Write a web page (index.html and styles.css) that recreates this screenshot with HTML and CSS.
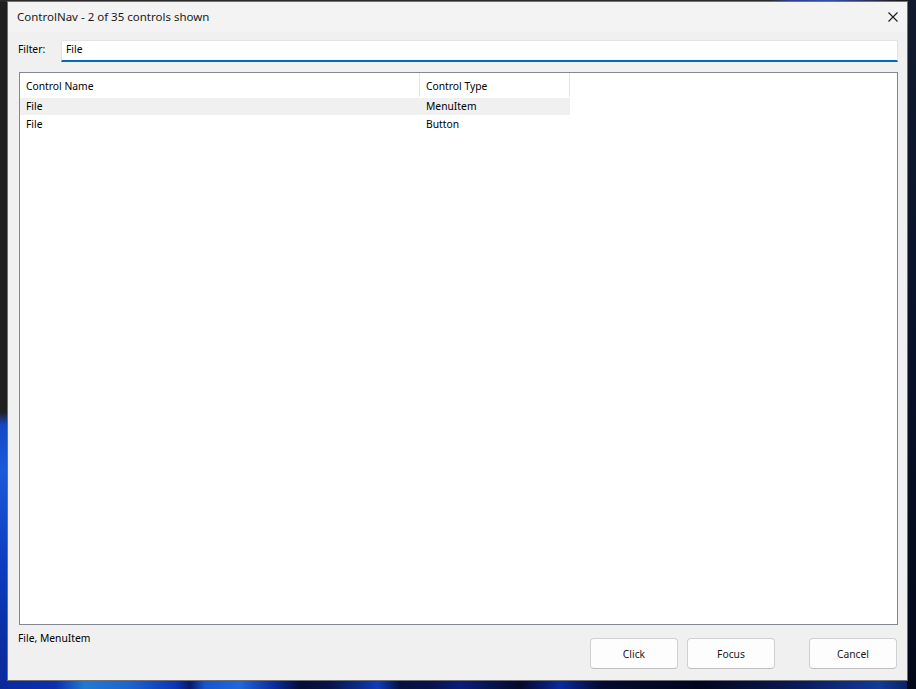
FILE: index.html
```html
<!DOCTYPE html>
<html lang="en">
<head>
<meta charset="utf-8">
<title>ControlNav</title>
<link rel="stylesheet" href="styles.css">
</head>
<body>
<div class="desktop">
  <div class="window">
    <div class="titlebar">
      <span class="title">ControlNav - 2 of 35 controls shown</span>
      <button class="close" aria-label="Close">
        <svg width="10" height="10" viewBox="0 0 10 10"><path d="M0.5 0.5 L9.5 9.5 M9.5 0.5 L0.5 9.5" stroke="#1b1b1b" stroke-width="1.1" fill="none"/></svg>
      </button>
    </div>
    <div class="content">
      <div class="filter-row">
        <label class="filter-label" for="filter">Filter:</label>
        <div class="filter-box"><input id="filter" class="filter-input" value="File"></div>
      </div>
      <div class="listview">
        <div class="lv-row lv-header">
          <div class="cell c-name">Control Name</div>
          <div class="cell c-type">Control Type</div>
        </div>
        <div class="lv-row selected">
          <div class="cell c-name">File</div>
          <div class="cell c-type">MenuItem</div>
        </div>
        <div class="lv-row">
          <div class="cell c-name">File</div>
          <div class="cell c-type">Button</div>
        </div>
      </div>
      <div class="footer">
        <div class="status">File, MenuItem</div>
        <div class="buttons">
          <button class="btn">Click</button>
          <button class="btn">Focus</button>
          <button class="btn btn-cancel">Cancel</button>
        </div>
      </div>
    </div>
  </div>
</div>
</body>
</html>
```

FILE: styles.css
```css
html, body {
  margin: 0;
  padding: 0;
}

body {
  width: 916px;
  height: 689px;
  overflow: hidden;
  font-family: "Noto Sans", "Open Sans", sans-serif;
  font-size: 11.5px;
  color: #000;
}

/* desktop wallpaper peeking around the dialog */
.desktop {
  position: relative;
  width: 916px;
  height: 689px;
  background:
    linear-gradient(to bottom, #111a2e, #07112a 50%, #030818) right top / 9px 100% no-repeat,
    linear-gradient(to right, #2a2a2a 0, #2a2a2a 770px, #2c3f8a 790px, #3550a8 830px, #2a2f58 870px, #1a1a1a 900px) left top / 100% 2px no-repeat,
    linear-gradient(to bottom, #1f1f1f 0, #1f1f1f 412px, #1547c4 425px, #1a5ad8 470px, #0d3cc0 560px, #0a2ea4 640px, #0a2a98 689px) left top / 8px 100% no-repeat,
    linear-gradient(to right, #0a2aa0 0, #0c2fb0 55px, #1f7ad4 85px, #1a64d0 130px, #0c36b8 175px, #061a6a 190px, #1656d0 205px, #1e68dc 240px, #0a2a9c 275px, #040c38 300px, #071448 330px, #0b2c8c 360px, #0f3cbc 378px, #051040 400px, #08124a 430px, #0a1e7a 460px, #040a28 520px, #0a1a70 545px, #0a2aa0 560px, #040a30 600px, #02061c 700px, #0a1a5a 800px, #113a9c 880px, #0a1a50 916px) left bottom / 100% 8px no-repeat,
    #0a1a44;
}

.window {
  position: absolute;
  left: 7px;
  top: 1px;
  width: 899px;
  height: 678px;
  border: 1px solid #6f7177;
  background: #f0f0f0;
  display: flex;
  flex-direction: column;
}

.titlebar {
  height: 30px;
  flex: none;
  background: #f3f3f3;
  display: flex;
  align-items: center;
  justify-content: space-between;
  padding-left: 9px;
}

.title {
  color: #1a1a1a;
  margin-top: -2px;
}

.close {
  width: 28px;
  height: 30px;
  border: 0;
  padding: 0;
  background: transparent;
  display: flex;
  align-items: center;
  justify-content: center;
  margin-top: -1px;
}

.close svg {
  display: block;
}

/* dialog controls use the smaller control font */
.content {
  flex: 1;
  display: flex;
  flex-direction: column;
  padding: 8px 9px 0 10px;
  font-size: 10.3px;
}

.filter-row {
  display: flex;
  align-items: center;
  height: 22px;
}

.filter-label {
  width: 43px;
  flex: none;
  padding-bottom: 4px;
}

.filter-box {
  flex: 1;
  height: 22px;
  box-sizing: border-box;
  background: #fff;
  border: 1px solid #e3e3e3;
  border-bottom: 2px solid #0067c0;
  border-radius: 2px 2px 0 0;
  display: flex;
  align-items: center;
}

.filter-input {
  border: 0;
  outline: none;
  background: transparent;
  font: inherit;
  color: #000;
  padding: 0 0 3px 4px;
  width: 100%;
  height: 18px;
  box-sizing: border-box;
}

.listview {
  margin: 10px 0 0 1px;
  height: 553px;
  box-sizing: border-box;
  border: 1px solid #828790;
  background: #fff;
  flex: none;
}

.lv-row {
  display: flex;
  height: 17px;
  align-items: center;
}

.lv-header {
  height: 24px;
  margin-bottom: 1px;
}

.lv-header .cell {
  height: 24px;
  line-height: 24px;
  padding-top: 1px;
  border-right: 1px solid #e5e5e5;
}

.cell {
  box-sizing: border-box;
  padding-left: 6px;
  white-space: nowrap;
}

.c-name {
  width: 400px;
}

.c-type {
  width: 150px;
}

.lv-row.selected .cell {
  background: #f0f0f0;
  height: 17px;
  line-height: 17px;
}

.footer {
  display: flex;
  justify-content: space-between;
  align-items: flex-start;
  padding-top: 6px;
}

.buttons {
  display: flex;
  margin-top: 7px;
  padding-right: 1px;
}

.btn {
  width: 88px;
  height: 31px;
  box-sizing: border-box;
  background: #fdfdfd;
  border: 1px solid #d0d0d0;
  border-bottom-color: #bdbdbd;
  border-radius: 4px;
  font: inherit;
  color: #1a1a1a;
  padding: 0;
  margin-left: 9px;
}

.btn-cancel {
  margin-left: 34px;
}
```
